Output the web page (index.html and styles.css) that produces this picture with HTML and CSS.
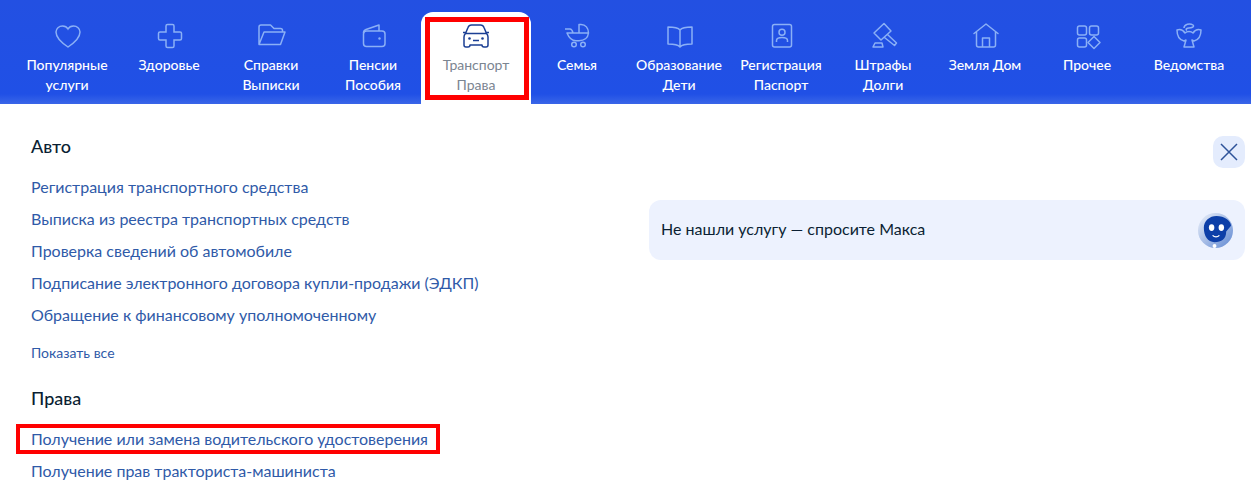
FILE: index.html
```html
<!DOCTYPE html>
<html lang="ru">
<head>
<meta charset="utf-8">
<title>Услуги</title>
<link rel="stylesheet" href="styles.css">
</head>
<body>
<nav class="nav">
  <a class="tab"><svg class="ico" viewBox="0 0 32 32"><path d="M17 27C11 23 5 18 5 12C5 8.500 8 6 11.500 6C14 6 16 7.200 17 9C18 7.200 20 6 22.500 6C26 6 29 8.500 29 12C29 18 23 23 17 27Z"/></svg><span>Популярные<br>услуги</span></a>
  <a class="tab"><svg class="ico" viewBox="0 0 32 32"><path d="M13 6C13 5 13.500 4.500 14.500 4.500H19.500C20.500 4.500 21 5 21 6V12H27C28 12 28.500 12.500 28.500 13.500V18.500C28.500 19.500 28 20 27 20H21V26C21 27 20.500 27.500 19.500 27.500H14.500C13.500 27.500 13 27 13 26V20H7C6 20 5.500 19.500 5.500 18.500V13.500C5.500 12.500 6 12 7 12H13Z"/></svg><span>Здоровье</span></a>
  <a class="tab"><svg class="ico" viewBox="0 0 32 32"><path d="M4 24V7C4 5.700 4.700 5 6 5H15.500L19 8.500H25.500C26.800 8.500 27.500 9.200 27.500 10.500V12M4 24.500L9 12H30L25.500 24.500Z" stroke-linejoin="round"/></svg><span>Справки<br>Выписки</span></a>
  <a class="tab"><svg class="ico" viewBox="0 0 32 32"><rect x="6.500" y="11" width="21.500" height="15.500" rx="3"/><path d="M6.500 13C6.500 11 7.500 10 9 9.500L22 5V11" stroke-linejoin="round"/><circle class="dot" cx="22.500" cy="18.500" r="1.200"/></svg><span>Пенсии<br>Пособия</span></a>
  <a class="tab tab-active"><svg class="ico" viewBox="0 0 32 32"><path d="M3 12.500H5.500M26.500 12.500H29M5.500 13.500L8 7.500C8.600 5.800 9.800 5 11.500 5H20.500C22.200 5 23.400 5.800 24 7.500L26.500 13.500M5.500 13.500C4.500 14.500 4 15.500 4 17V25C4 26.200 4.800 27 6 27H8C9.200 27 10 26.200 10 25H22C22 26.200 22.800 27 24 27H26C27.200 27 28 26.200 28 25V17C28 15.500 27.500 14.500 26.500 13.500ZM13 20.500H19" stroke-linejoin="round"/><circle class="dot" cx="9.500" cy="18.500" r="1.300"/><circle class="dot" cx="22.500" cy="18.500" r="1.300"/></svg><span>Транспорт<br>Права</span></a>
  <a class="tab"><svg class="ico" viewBox="0 0 32 32"><path d="M4 9H9C11 9 11.500 11 12 13M18 13V4.500H20C24.500 4.500 27.500 8 27.500 13M6 13H27.500C27 18 23 20.700 18 20.700H15C11 20.700 8 18 6 13Z" stroke-linejoin="round"/><circle cx="13" cy="24.500" r="2.300"/><circle cx="22" cy="24.500" r="2.300"/></svg><span>Семья</span></a>
  <a class="tab"><svg class="ico" viewBox="0 0 32 32"><path d="M17 10C15 7.500 11 7 5 7V24C11 24 15 24.500 17 27C19 24.500 23 24 29 24V7C23 7 19 7.500 17 10ZM17 10V27" stroke-linejoin="round"/></svg><span>Образование<br>Дети</span></a>
  <a class="tab"><svg class="ico" viewBox="0 0 32 32"><rect x="7.500" y="4.500" width="19" height="22.500" rx="2"/><circle cx="17" cy="12.300" r="3"/><path d="M11.500 22V20.500C11.500 18.500 13.500 17.500 17 17.500C20.500 17.500 22.500 18.500 22.500 20.500V22"/></svg><span>Регистрация<br>Паспорт</span></a>
  <a class="tab"><svg class="ico" viewBox="0 0 32 32"><path d="M17 3.500L24 11L14 20L7 13ZM20.500 14.500L29.500 23L27.500 25.500L17.500 17.500M6 27L8 23H15L16 27Z" stroke-linejoin="round"/></svg><span>Штрафы<br>Долги</span></a>
  <a class="tab"><svg class="ico" viewBox="0 0 32 32"><path d="M5 13.500L17 4L29 13.500M7.500 12V25C7.500 26.300 8.200 27 9.500 27H24.500C25.800 27 26.500 26.300 26.500 25V12M13.500 27V18H20.500V27" stroke-linejoin="round" stroke-linecap="round"/></svg><span>Земля Дом</span></a>
  <a class="tab"><svg class="ico" viewBox="0 0 32 32"><rect x="6.500" y="6" width="9" height="9" rx="2"/><rect x="18.500" y="6" width="9" height="9" rx="2"/><rect x="6.500" y="18" width="9" height="9" rx="2"/><path d="M23 16.500L29 22.500L23 28.500L17 22.500Z" stroke-linejoin="round"/></svg><span>Прочее</span></a>
  <a class="tab"><svg class="ico" viewBox="0 0 32 32"><path d="M4 10C4 16 7 20 11 21L13 20L11 27H21L19 20L21 21C25 20 28 16 28 10C25 9 22 10 20 13C18 11 14 11 12 13C10 10 7 9 4 10ZM11 8C11 4 17 3 20 5C22 7 18 8 16 8C14 8 12 9 14 10.500" stroke-linejoin="round"/></svg><span>Ведомства</span></a>
</nav>
<main class="content">
  <section class="lists">
    <h2>Авто</h2>
    <ul>
      <li><a>Регистрация транспортного средства</a></li>
      <li><a>Выписка из реестра транспортных средств</a></li>
      <li><a>Проверка сведений об автомобиле</a></li>
      <li><a>Подписание электронного договора купли-продажи (ЭДКП)</a></li>
      <li><a>Обращение к финансовому уполномоченному</a></li>
    </ul>
    <a class="more">Показать все</a>
    <h2>Права</h2>
    <ul>
      <li><a class="marked">Получение или замена водительского удостоверения</a></li>
      <li><a>Получение прав тракториста-машиниста</a></li>
    </ul>
  </section>
  <aside class="side">
    <button class="close" aria-label="Закрыть"><svg viewBox="0 0 32 32"><path d="M8 8L24 24M24 8L8 24"/></svg></button>
    <div class="ask">
      <span class="ask-text">Не нашли услугу — спросите Макса</span>
      <svg class="robot" viewBox="0 0 36 36"><defs><linearGradient id="g" x1="0" y1="0" x2="1" y2="1"><stop offset="0" stop-color="#eef2fa"/><stop offset="1" stop-color="#5f88d2"/></linearGradient></defs><circle cx="18" cy="18" r="18" fill="url(#g)"/><path d="M6 15C6 8 12 3 19 3C27 3 34 8 34 13L29 19C29 27 24 30 17 30C10 30 6 24 6 15Z" fill="#0d3fa8"/><ellipse cx="14" cy="15" rx="2.800" ry="3.500" fill="#fff"/><ellipse cx="24" cy="15" rx="2.800" ry="3.500" fill="#fff"/><path d="M15 23C17 25 20 25 22 23" stroke="#fff" stroke-width="1.400" fill="none"/><circle cx="17" cy="34" r="2" fill="#fff"/></svg>
    </div>
  </aside>
</main>
</body>
</html>
```
FILE: styles.css
```css
html, body { margin: 0; padding: 0; }
body {
  height: 485px;
  overflow: hidden;
  background: #fff;
  font-family: Lato, "Noto Sans", sans-serif;
  color: #0b1f33;
}
.nav {
  display: grid;
  grid-template-columns: repeat(12, 102px);
  height: 104px;
  padding-left: 16px;
  box-sizing: border-box;
  background: linear-gradient(#2350e2 0, #2050e6 94px, #3a66e8 100%);
}
.tab {
  display: flex;
  flex-direction: column;
  align-items: center;
  padding-top: 20px;
  color: #fff;
  font-size: 14px;
  font-weight: 500;
  line-height: 20px;
  text-align: center;
  white-space: nowrap;
}
.tab span { margin-top: 3px; }
.ico {
  width: 32px;
  height: 32px;
  fill: none;
  stroke: #8bb0f6;
  stroke-width: 1.500;
}
.dot { fill: #8bb0f6; stroke: none; }
.tab-active {
  position: relative;
  margin: 12px -5px 0 -3px;
  padding-top: 8px;
  background: #fff;
  border-radius: 12px 12px 0 0;
  color: #7b8591;
  font-weight: 400;
}
.tab-active .ico { stroke: #1b3f94; }
.tab-active .dot { fill: #1b3f94; stroke: none; }
.tab-active::after {
  content: "";
  position: absolute;
  left: 4px;
  right: 2px;
  top: 5px;
  bottom: 4px;
  border: 5px solid #ff0000;
}
.content {
  display: flex;
  justify-content: space-between;
  padding: 0 6px 0 31px;
}
.lists { width: 600px; padding-top: 30px; }
h2 {
  margin: 0 0 17px;
  font-size: 18px;
  line-height: 24px;
  font-weight: 500;
  color: #0b1f33;
}
ul { margin: 0; padding: 0; list-style: none; }
li { height: 32px; font-size: 16px; line-height: 24px; color: #2f5aa8; white-space: nowrap; }
.marked { position: relative; }
.marked::after {
  content: "";
  position: absolute;
  left: -15px;
  right: -12px;
  top: -5px;
  bottom: -6px;
  border: 4px solid #ff0000;
}
.more {
  display: block;
  margin: 8px 0 23px;
  font-size: 14px;
  line-height: 20px;
  color: #2f5aa8;
}
.side {
  width: 596px;
  padding-top: 32px;
  display: flex;
  flex-direction: column;
  align-items: flex-end;
}
.close {
  width: 32px;
  height: 32px;
  padding: 0;
  border: 0;
  border-radius: 10px;
  background: #e4ecfd;
}
.close svg { display: block; width: 32px; height: 32px; fill: none; stroke: #2d5299; stroke-width: 1.500; }
.ask {
  display: flex;
  align-items: center;
  justify-content: space-between;
  box-sizing: border-box;
  width: 596px;
  height: 60px;
  margin-top: 32px;
  padding: 0 12px;
  border-radius: 12px;
  background: #edf2fe;
  font-size: 16px;
  color: #0b1f33;
}
.ask-text { padding-bottom: 3px; }
.robot { width: 35px; height: 35px; }
```
